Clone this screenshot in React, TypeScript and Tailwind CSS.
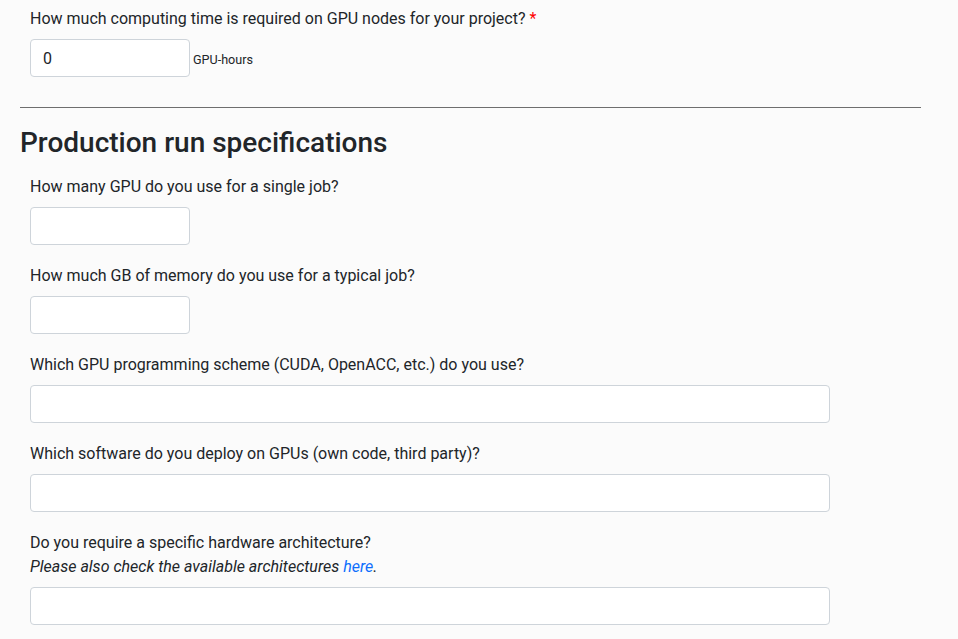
import React from 'react';

const inputCls =
  'block h-[38px] rounded-[4px] border border-[#ced4da] bg-white px-3 text-base text-[#212529] outline-none';

const Field: React.FC<{ label: React.ReactNode; hint?: React.ReactNode; wide?: boolean; value?: string }> = ({
  label,
  hint,
  wide,
  value,
}) => (
  <div className="mb-[18px]">
    <label className="block pt-px leading-6">{label}</label>
    {hint && <div className="italic leading-6">{hint}</div>}
    <input
      className={`${inputCls} mt-[8px] ${wide ? 'w-[800px]' : 'w-[160px]'}`}
      defaultValue={value}
    />
  </div>
);

export default function App() {
  return (
    <div
      className="min-h-screen bg-[#fbfbfb] text-[#212529] text-base"
      style={{ fontFamily: 'Roboto, "Liberation Sans", sans-serif' }}
    >
      <div className="pl-[30px] pt-[6px]">
        <label className="block pt-px leading-6">
          How much computing time is required on GPU nodes for your project? <span className="text-[#ff0000]">*</span>
        </label>
        <div className="mt-[8px] flex items-baseline gap-[3px]">
          <input className={`${inputCls} w-[160px]`} defaultValue="0" />
          <span className="text-[12.6px]">GPU-hours</span>
        </div>
      </div>

      <hr className="ml-[20px] mt-[30px] w-[901px] border-0 border-t border-[#6e6e6e]" />

      <div className="pl-[20px] pt-[18px]">
        <h3 className="text-[28px] font-medium leading-[1.2]">Production run specifications</h3>
      </div>

      <div className="pl-[30px] pt-[14px]">
        <Field label="How many GPU do you use for a single job?" />
        <Field label="How much GB of memory do you use for a typical job?" />
        <Field label="Which GPU programming scheme (CUDA, OpenACC, etc.) do you use?" wide />
        <Field label="Which software do you deploy on GPUs (own code, third party)?" wide />
        <Field
          label="Do you require a specific hardware architecture?"
          hint={
            <>
              Please also check the available architectures{' '}
              <a href="#" className="text-[#0d6efd]">
                here
              </a>
              .
            </>
          }
          wide
        />
      </div>
    </div>
  );
}
